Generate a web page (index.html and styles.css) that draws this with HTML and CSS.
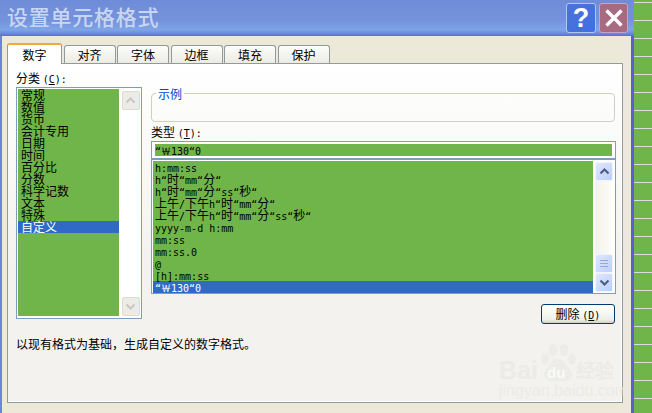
FILE: index.html
```html
<!DOCTYPE html>
<html lang="zh-CN">
<head>
<meta charset="utf-8">
<title>设置单元格格式</title>
<link rel="stylesheet" href="styles.css">
</head>
<body>
<div class="screen">
  <div class="window">
    <div class="titlebar">
      <div class="title">设置单元格格式</div>
      <div class="win-buttons">
        <div class="win-btn help">?</div>
        <div class="win-btn close">
          <svg width="20" height="20" viewBox="0 0 20 20"><path d="M2.5 2.5 17.5 17.5M17.5 2.5 2.5 17.5" stroke="#fff" stroke-width="3.4" fill="none"/></svg>
        </div>
      </div>
    </div>
    <div class="body">
      <div class="tabs">
        <div class="tab active">数字</div>
        <div class="tab">对齐</div>
        <div class="tab">字体</div>
        <div class="tab">边框</div>
        <div class="tab">填充</div>
        <div class="tab">保护</div>
      </div>
      <div class="panel">
        <div class="columns">
          <div class="col-left">
            <div class="label">分类 <span class="lat">(<u>C</u>):</span></div>
            <div class="listbox cat">
              <div class="items">
                <div class="row">常规</div>
                <div class="row">数值</div>
                <div class="row">货币</div>
                <div class="row">会计专用</div>
                <div class="row">日期</div>
                <div class="row">时间</div>
                <div class="row">百分比</div>
                <div class="row">分数</div>
                <div class="row">科学记数</div>
                <div class="row">文本</div>
                <div class="row">特殊</div>
                <div class="row sel">自定义</div>
              </div>
              <div class="scrollbar off">
                <div class="sb-btn"><svg width="11" height="7" viewBox="0 0 11 7"><path d="M1.5 5.5 5.5 1.5 9.5 5.5" class="chev"/></svg></div>
                <div class="sb-track"></div>
                <div class="sb-btn"><svg width="11" height="7" viewBox="0 0 11 7"><path d="M1.5 1.5 5.5 5.5 9.5 1.5" class="chev"/></svg></div>
              </div>
            </div>
          </div>
          <div class="col-right">
            <fieldset class="sample"><legend>示例</legend></fieldset>
            <div class="label type-label">类型 <span class="lat">(<u>T</u>):</span></div>
            <div class="input"><div class="input-fill"><span class="lat">“￦130“0</span></div></div>
            <div class="listbox fmt">
              <div class="items">
                <div class="row"><span class="lat">h:mm:ss</span></div>
                <div class="row"><span class="lat">h“</span>时<span class="lat">“mm“</span>分<span class="lat">“</span></div>
                <div class="row"><span class="lat">h“</span>时<span class="lat">“mm“</span>分<span class="lat">“ss“</span>秒<span class="lat">“</span></div>
                <div class="row">上午<span class="lat">/</span>下午<span class="lat">h“</span>时<span class="lat">“mm“</span>分<span class="lat">“</span></div>
                <div class="row">上午<span class="lat">/</span>下午<span class="lat">h“</span>时<span class="lat">“mm“</span>分<span class="lat">“ss“</span>秒<span class="lat">“</span></div>
                <div class="row"><span class="lat">yyyy-m-d h:mm</span></div>
                <div class="row"><span class="lat">mm:ss</span></div>
                <div class="row"><span class="lat">mm:ss.0</span></div>
                <div class="row"><span class="lat">@</span></div>
                <div class="row"><span class="lat">[h]:mm:ss</span></div>
                <div class="row sel"><span class="lat">“￦130“0</span></div>
              </div>
              <div class="scrollbar on">
                <div class="sb-btn"><svg width="11" height="7" viewBox="0 0 11 7"><path d="M1.5 5.5 5.5 1.5 9.5 5.5" class="chev"/></svg></div>
                <div class="sb-track"></div>
                <div class="sb-btn thumb"><svg width="8" height="9" viewBox="0 0 8 9"><path d="M0 1.5H8M0 4.5H8M0 7.5H8" stroke="#8fa8e0" fill="none"/></svg></div>
                <div class="sb-btn"><svg width="11" height="7" viewBox="0 0 11 7"><path d="M1.5 1.5 5.5 5.5 9.5 1.5" class="chev"/></svg></div>
              </div>
            </div>
            <div class="actions"><div class="button">删除 <span class="lat">(<u>D</u>)</span></div></div>
          </div>
        </div>
        <div class="desc">以现有格式为基础，生成自定义的数字格式。</div>
        <div class="watermark">
          <div class="wm-logo">
            <span class="wm-bai">Bai</span>
            <span class="wm-paw">
              <svg width="36" height="38" viewBox="0 0 36 38">
                <ellipse cx="5" cy="15" rx="4" ry="5.5"/>
                <ellipse cx="13" cy="6" rx="4.5" ry="6"/>
                <ellipse cx="24" cy="6" rx="4.5" ry="6"/>
                <ellipse cx="32" cy="15" rx="4" ry="5.5"/>
                <path d="M18 15C11 15 10 22 6 26 2 31 5 37 12 37H25C32 37 34 31 30 26 26 22 25 15 18 15Z"/>
              </svg>
              <span class="wm-du">du</span>
            </span>
            <span class="wm-cn">经验</span>
          </div>
          <div class="wm-url">jingyan.baidu.com</div>
        </div>
      </div>
    </div>
  </div>
  <div class="strip"></div>
</div>
</body>
</html>
```
FILE: styles.css
```css
* { box-sizing: border-box; }
html, body { margin: 0; padding: 0; }
body {
  width: 652px;
  height: 413px;
  overflow: hidden;
  font: 12px/12px "Noto Sans CJK SC", sans-serif;
  color: #000;
}
.screen { display: flex; width: 652px; height: 413px; }
.window {
  width: 634px;
  display: flex;
  flex-direction: column;
  background: #ece9d8;
  border-left: 2px solid #6d83dc;
  border-right: 3px solid #5a60cf;
}
.strip {
  width: 18px;
  background-color: #70b54a;
  background-image: linear-gradient(to bottom, #dcdcdc 0, #dcdcdc 1px, #70b54a 1px, #70b54a 100%);
  background-size: 100% 18px;
  background-position: 0 2px;
}
.titlebar {
  height: 36px;
  margin-left: -2px;
  margin-right: -3px;
  padding: 3px 6px 0 7px;
  display: flex;
  justify-content: space-between;
  align-items: flex-start;
  background: linear-gradient(to bottom, #6f8cd8 0, #7492dc 20px, #7ea4e6 30px, #6d8de0 33px, #5f6bd2 36px);
}
.title {
  font-size: 21px;
  line-height: 25px;
  letter-spacing: 0.75px;
  color: #c9d6f2;
  margin-top: 1px;
  font-weight: 500;
}
.win-buttons { display: flex; gap: 3px; }
.win-btn {
  width: 30px;
  height: 30px;
  border: 1px solid #b5c6ee;
  border-radius: 3px;
  display: flex;
  align-items: center;
  justify-content: center;
  color: #fff;
}
.help {
  background: linear-gradient(135deg, #4e72d6, #3f6fe6);
  font: bold 27px/28px "Liberation Sans", sans-serif;
}
.close {
  width: 29px;
  background: #a86a80;
  border-color: #c4a6c4;
}
.body { flex: 1; padding: 7px 8px 0 5px; display: flex; flex-direction: column; }
.tabs { display: flex; align-items: flex-end; height: 20px; gap: 1.5px; position: relative; z-index: 1; }
.tab {
  width: 52px;
  height: 18px;
  background: linear-gradient(to bottom, #fdfdfb, #ecebe3);
  border: 1px solid #919b9c;
  border-bottom: none;
  border-radius: 3px 3px 0 0;
  text-align: center;
  line-height: 17px;
}
.tab.active {
  width: 55px;
  height: 21px;
  margin-bottom: -1px;
  background: #fff;
  border-top: 2px solid #f2a93a;
  border-color: #f2a93a #919b9c #fff;
  line-height: 19px;
}
.panel {
  position: relative;
  width: 616px;
  height: 340px;
  border: 1px solid #919b9c;
  box-shadow: inset -1px -1px 0 #fff;
  background: linear-gradient(to bottom, #fff, #f3f2ee 60%);
  padding: 8px 0 0 8px;
}
.columns { display: flex; gap: 9px; }
.col-left { width: 126px; }
.col-right { width: 465px; padding-top: 15px; }
.label { height: 12px; margin-bottom: 3px; white-space: nowrap; }
.lat { font: 10px/12px "DejaVu Sans Mono", monospace; }
.listbox {
  display: flex;
  border: 1px solid #7f9db9;
  background: #fff;
  padding: 1px;
}
.cat { height: 232px; padding-bottom: 2px; }
.cat .items { width: 101px; }
.items { background: #70b54a; }
.row { height: 12px; line-height: 12px; padding-left: 2px; white-space: nowrap; }
.row.sel { background: #316ac5; color: #fff; }
.cat .row { padding-left: 3px; }
.scrollbar { display: flex; flex-direction: column; align-items: center; padding: 1px 1px 0 2px; width: 21px; }
.sb-btn {
  width: 18px;
  height: 19px;
  flex: none;
  border: 1px solid #fff;
  border-radius: 2px;
  display: flex;
  align-items: center;
  justify-content: center;
}
.sb-track { flex: 1; }
.chev { fill: none; stroke-width: 2.2; }
.off .sb-btn { background: #ecebe5; border-color: #dcdcd4; }
.off .chev { stroke: #c9c9c1; }
.cat .scrollbar { padding-left: 3px; padding-top: 2px; }
.cat .sb-track { background: #fdfdfa; }
.on .sb-btn { background: linear-gradient(135deg, #dfe8fd, #bccffa); border-color: #f0f4fd; }
.on .chev { stroke: #4d6185; }
.on .sb-track { background: linear-gradient(to right, #f3f1ec, #fdfdfa); width: 18px; }
.sample {
  margin: 0;
  padding: 0;
  height: 35px;
  border: 1px solid #d0d0bf;
  border-radius: 4px;
  width: 464px;
}
.sample legend {
  margin-left: 4px;
  padding: 0 2px;
  line-height: 13px;
  color: #0046d5;
}
.type-label { margin-top: 4px; }
.input {
  height: 18px;
  border: 1px solid #7f9db9;
  background: #fff;
  padding: 2px 3px;
}
.input-fill { height: 12px; background: #70b54a; line-height: 12px; }
.fmt { height: 135px; }
.fmt .items { width: 440px; }
.actions { display: flex; justify-content: flex-end; margin-top: 10px; padding-right: 1px; }
.button {
  width: 74px;
  height: 20px;
  border: 1px solid #003c74;
  border-radius: 3px;
  background: linear-gradient(to bottom, #fff, #f0f0ea 80%, #d6d0c5);
  text-align: center;
  line-height: 18px;
}
.desc { padding-top: 14px; }
.watermark {
  position: absolute;
  right: 7px;
  bottom: 3px;
  width: 116px;
  color: #ebebe7;
}
.wm-logo { display: flex; align-items: flex-end; height: 38px; }
.wm-bai { font: bold 25px/24px "Liberation Sans", sans-serif; width: 41px; }
.wm-paw { position: relative; display: block; width: 36px; height: 38px; }
.wm-paw svg { fill: #ecece8; display: block; }
.wm-du {
  position: absolute;
  left: 7px;
  bottom: 2px;
  font: bold 15px/15px "Liberation Sans", sans-serif;
  color: #fafaf8;
}
.wm-cn { font-size: 19px; line-height: 24px; font-weight: 700; white-space: nowrap; }
.wm-url { font: 16px/16px "Liberation Sans", sans-serif; margin-top: 1px; white-space: nowrap; }
```
